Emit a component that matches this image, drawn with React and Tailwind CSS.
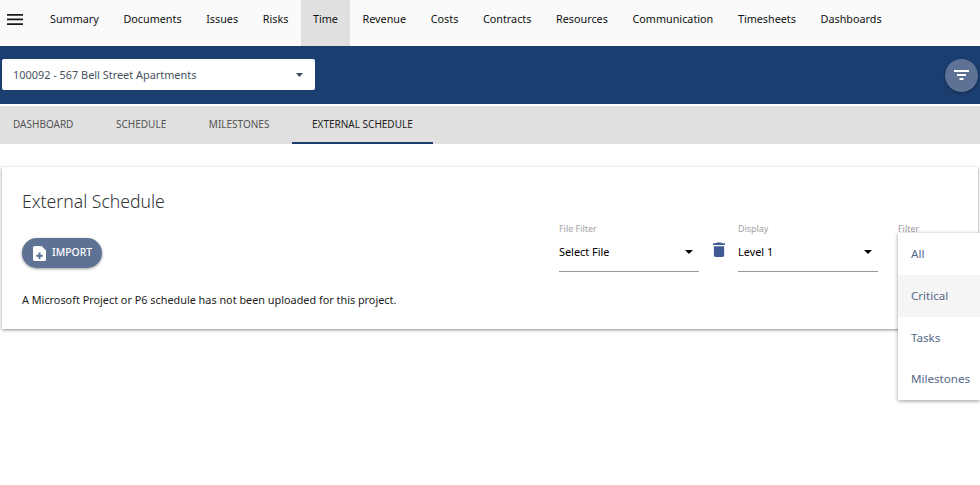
import React from 'react';

const navItems = ['Summary', 'Documents', 'Issues', 'Risks', 'Time', 'Revenue', 'Costs', 'Contracts', 'Resources', 'Communication', 'Timesheets', 'Dashboards'];
const tabs = [
  { label: 'DASHBOARD', cls: 'ml-[-7px]' },
  { label: 'SCHEDULE', cls: 'ml-[2.6px]' },
  { label: 'MILESTONES', cls: 'ml-[2.6px]' },
  { label: 'EXTERNAL SCHEDULE', cls: 'ml-[2.6px]', active: true },
];
const filterOptions = ['All', 'Critical', 'Tasks', 'Milestones'];

function Caret({ className, w = 8, h = 4 }) {
  return (
    <svg width={w} height={h} viewBox="0 0 10 5" preserveAspectRatio="none" className={className}>
      <path d="M0 0h10L5 5z" fill="currentColor" />
    </svg>
  );
}

function SelectField({ label, value, width }) {
  return (
    <div className={`${width} flex flex-col`}>
      <span className="text-[8.9px] leading-[12px] text-[#a0a0a0]">{label}</span>
      <div className="mt-[9px] flex h-[28px] items-start justify-between border-b border-[#999] pr-[6px]">
        <span className="text-[10.9px] leading-[15px] text-black">{value}</span>
        <Caret className="mt-[6px] text-black" />
      </div>
    </div>
  );
}

export default function App() {
  return (
    <div className="relative h-[485px] w-[980px] overflow-hidden bg-white font-['Noto_Sans',sans-serif]">
      {/* top nav */}
      <div className="flex h-[46px] items-stretch bg-[#fafafa]">
        <div className="flex w-[37.7px] items-start pl-[7px] pt-[14px]">
          <svg width="16" height="11" viewBox="0 0 16 11">
            <path d="M0 0h16v1.7H0zM0 4.6h16v1.7H0zM0 9.3h16V11H0z" fill="#1a1a1a" />
          </svg>
        </div>
        {navItems.map((item) => (
          <div key={item} className={`flex items-center px-[12.3px] pb-[7px] text-[10.8px] text-[#111] ${item === 'Time' ? 'bg-[#e0e0e0]' : ''}`}>
            {item}
          </div>
        ))}
      </div>

      {/* project bar */}
      <div className="flex h-[58px] items-center justify-between bg-[#1b3e70] pl-[2px] pr-[2px]">
        <div className="mb-[1px] flex h-[31px] w-[313px] items-center justify-between rounded-[2px] bg-white pl-[11px] pr-[12px]">
          <span className="pt-[1px] text-[10.9px] text-[#46525f]">100092 - 567 Bell Street Apartments</span>
          <Caret className="text-[#3d4a5c]" w={7} h={4} />
        </div>
        <div className="flex h-[33px] w-[33px] items-center justify-center rounded-full bg-[#5d7294] shadow-[0_1px_3px_rgba(0,0,0,0.4)]">
          <svg width="15" height="10" viewBox="0 0 15 10">
            <path d="M0 0h15v2H0zM3 4h9v2H3zM5.5 8h4v2h-4z" fill="#fff" />
          </svg>
        </div>
      </div>

      {/* tabs */}
      <div className="mt-[2px] flex h-[38px] bg-[#e0e0e0]">
        {tabs.map((tab) => (
          <div
            key={tab.label}
            className={`flex items-center border-b-2 px-[20px] pt-[1px] text-[10px] ${tab.cls} ${tab.active ? 'border-[#1b3e70] text-[#222]' : 'border-transparent text-[#555]'}`}
          >
            {tab.label}
          </div>
        ))}
      </div>

      {/* card */}
      <div className="ml-[2px] mr-[2px] mt-[23px] h-[162px] bg-white px-[20px] pt-[22px] shadow-[0_1px_3px_rgba(0,0,0,0.45)]">
        <h1 className="text-[17.6px] font-light leading-[24px] text-[#333]">External Schedule</h1>
        <div className="flex items-start justify-between">
          <div>
            <button className="mt-[25px] flex h-[30px] w-[80px] items-center rounded-full bg-[#5d7294] pl-[11px] text-[10.4px] font-medium text-white shadow-[0_1px_3px_rgba(0,0,0,0.4)]">
              <svg width="13" height="15" viewBox="0 0 13 15" className="mr-[6px]">
                <path d="M1.5 0H8.5L13 4.5V13.5A1.5 1.5 0 0 1 11.5 15H1.5A1.5 1.5 0 0 1 0 13.5V1.5A1.5 1.5 0 0 1 1.5 0z" fill="#fff" />
                <path d="M5.5 6.5h2v2.2h2.2v2H7.5v2.3h-2v-2.3H3.3v-2h2.2z" fill="#5d7294" />
              </svg>
              IMPORT
            </button>
            <p className="mt-[24px] whitespace-nowrap text-[10.85px] leading-[16px] text-[#1c1c1c]">
              A Microsoft Project or P6 schedule has not been uploaded for this project.
            </p>
          </div>
          <div className="mr-[-22px] mt-[10px] flex w-[421px] shrink-0 items-start">
            <SelectField label="File Filter" value="Select File" width="w-[140px]" />
            <svg width="12" height="15" viewBox="0 0 14 18" preserveAspectRatio="none" className="ml-[14px] mr-[13px] mt-[19px] shrink-0">
              <path d="M1 5h12v11a2 2 0 0 1-2 2H3a2 2 0 0 1-2-2zM14 1.5V3.5H0V1.5h3.5L4.5 0.5h5l1 1z" fill="#3d5a94" />
            </svg>
            <SelectField label="Display" value="Level 1" width="w-[140px]" />
            <span className="ml-[20px] text-[8.9px] leading-[12px] text-[#a0a0a0]">Filter</span>
          </div>
        </div>
      </div>

      {/* filter menu */}
      <div className="absolute left-[898px] top-[233px] flex h-[167px] w-[82px] flex-col bg-white shadow-[0_1px_4px_rgba(0,0,0,0.4)]">
        {filterOptions.map((opt) => (
          <div key={opt} className={`flex h-[42px] items-center pl-[13px] text-[11.6px] text-[#54688a] ${opt === 'Critical' ? 'bg-[#f5f5f5]' : ''}`}>
            {opt}
          </div>
        ))}
      </div>
    </div>
  );
}
